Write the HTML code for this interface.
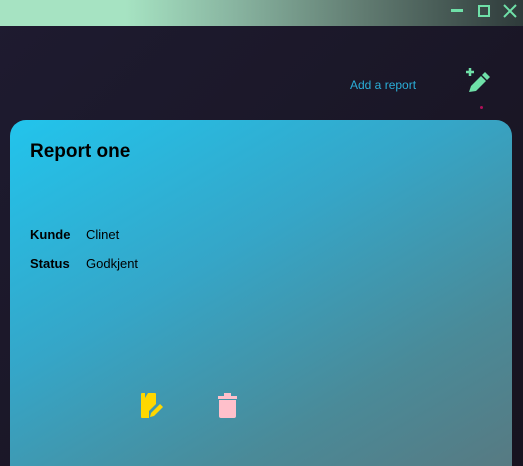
<!DOCTYPE html>
<html><head><style>
html,body{margin:0;width:523px;height:466px;overflow:hidden}
body{background:linear-gradient(135deg,#1e1b30,#17131f);font-family:"Liberation Sans",sans-serif;position:relative}
.tb{position:absolute;left:0;top:0;width:523px;height:26px;background:linear-gradient(90deg,#a6e3c2 0,#a6e3c2 24%,#88b4a0 45%,#607a70 70%,#2e3a3a 100%)}
.card{position:absolute;left:10px;top:120px;width:502px;height:346px;border-radius:16px 16px 0 0;background:linear-gradient(150deg,#22c4ec 0%,#35a6c8 40%,#4a8a98 75%,#577a82 100%)}
.t{position:absolute;color:#000}
</style></head><body>
<div class="tb">
<div style="position:absolute;left:451px;top:9px;width:12px;height:3px;background:#6fe0a8"></div>
<div style="position:absolute;left:478px;top:5px;width:8px;height:8px;border:2px solid #6fe0a8"></div>
<svg style="position:absolute;left:503px;top:4px" width="14" height="14"><path d="M1 1L13 13M13 1L1 13" stroke="#6fe0a8" stroke-width="2"/></svg>
</div>
<div style="position:absolute;left:350px;top:78px;font-size:12px;color:#2aaed8">Add a report</div>
<svg style="position:absolute;left:466px;top:68px" width="28" height="26" viewBox="0 0 28 26"><path d="M4 0v8M0 4h8" stroke="#6fe0a8" stroke-width="2.5"/><path d="M3 24l2-6 10-10 5 5-10 10z M16 7l3-3 5 5-3 3z" fill="#6fe0a8"/></svg>
<div style="position:absolute;left:480px;top:106px;width:3px;height:3px;border-radius:50%;background:#b0105a"></div>
<div class="card"></div>
<div class="t" style="left:30px;top:141px;font-size:19px;font-weight:bold">Report one</div>
<div class="t" style="left:30px;top:227px;font-size:13px;font-weight:bold">Kunde</div>
<div class="t" style="left:86px;top:227px;font-size:13px">Clinet</div>
<div class="t" style="left:30px;top:256px;font-size:13px;font-weight:bold">Status</div>
<div class="t" style="left:86px;top:256px;font-size:13px">Godkjent</div>
<svg style="position:absolute;left:141px;top:393px" width="25" height="26" viewBox="0 0 25 26"><path d="M1 0h3v5l3-5h7a1 1 0 0 1 1 1v10l-7 7v7H1a1 1 0 0 1-1-1V1a1 1 0 0 1 1-1z" fill="#ffd700"/><path d="M9 24l1-4 9-9 3 3-9 9z" fill="#ffd700"/></svg>
<svg style="position:absolute;left:218px;top:393px" width="19" height="26" viewBox="0 0 19 26"><rect x="6" y="0" width="7" height="3" fill="#ffc0cb"/><rect x="0" y="3" width="19" height="3" fill="#ffc0cb"/><path d="M1 7h17v16a2 2 0 0 1-2 2H3a2 2 0 0 1-2-2z" fill="#ffc0cb"/></svg>
</body></html>
